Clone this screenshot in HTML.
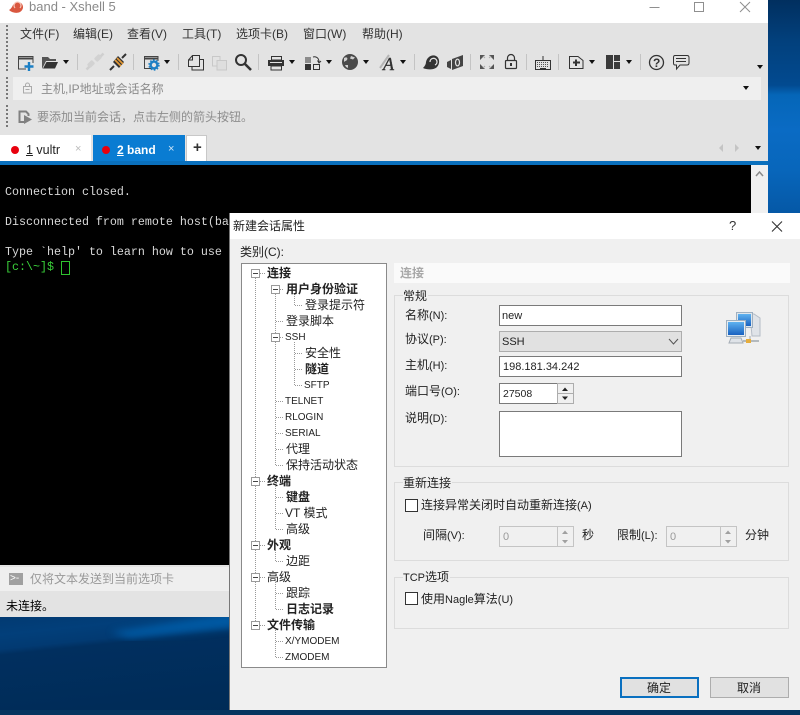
<!DOCTYPE html>
<html><head><meta charset="utf-8"><style>
html,body{margin:0;padding:0}
body{width:800px;height:715px;overflow:hidden;position:relative;background:#002f5f;font-family:"Liberation Sans","Noto Sans CJK SC",sans-serif;font-size:12px;color:#222}
div,span.a{position:absolute}
.t{position:absolute;white-space:nowrap;line-height:16px;height:16px}
.t i{font-style:normal;font-size:11px}
.b{font-weight:bold;color:#000}
.m{font-size:12px;color:#333}
.in{background:#fff;border:1px solid #7a7a7a;box-sizing:border-box}
.g{border:1px solid #dcdcdc;box-sizing:border-box}
.lb{background:#f0f0f0;padding:0 1px 0 0}
.sep{width:1px;height:16px;top:54px;background:#c4c4c4}
.ar{width:0;height:0;border-left:3.5px solid transparent;border-right:3.5px solid transparent;border-top:4px solid #111}
.ck{width:13px;height:13px;border:1px solid #333;background:#fff;box-sizing:border-box}
.tr{font-size:12px;color:#222}
.la{font-size:10px !important;margin-left:-1px;margin-top:1px}
svg{position:absolute;left:0;top:0}
</style></head><body>
<!-- desktop -->
<div style="left:768px;top:0;width:32px;height:213px;background:linear-gradient(180deg,#012f5f 0,#02407c 40px,#024a90 85px,#0566b8 95px,#0a6bc4 130px,#0866bb 170px,#0558a6 213px)"></div>
<div style="left:0;top:617px;width:230px;height:98px;background:linear-gradient(174deg,#023a72 0,#023f7a 18px,#023a72 32px,#012f5f 38px,#002b56 100%)"></div>
<svg width="230" height="715" viewBox="0 0 230 715" fill="none"><defs><filter id="bl"><feGaussianBlur stdDeviation="4"/></filter></defs><path d="M110 632L234 612V628L130 638Z" fill="#0663b2" opacity=".75" filter="url(#bl)"/></svg>
<div style="left:0;top:710px;width:800px;height:5px;background:#06345f"></div>
<!-- window -->
<div style="left:0;top:0;width:768px;height:23px;background:#fff"></div>
<div style="left:0;top:23px;width:768px;height:139px;background:#e3e3e3"></div>
<div class="t" style="left:29px;top:-1px;line-height:16px;font-size:13px;color:#8a8a8a">band - Xshell 5</div>
<!-- grips -->
<div style="left:6px;top:25px;width:2px;height:46px;background:repeating-linear-gradient(180deg,#777 0 2px,transparent 2px 4px)"></div>
<div style="left:6px;top:77px;width:2px;height:23px;background:repeating-linear-gradient(180deg,#777 0 2px,transparent 2px 4px)"></div>
<div style="left:6px;top:105px;width:2px;height:23px;background:repeating-linear-gradient(180deg,#777 0 2px,transparent 2px 4px)"></div>
<!-- menu -->
<div class="t m" style="left:20px;top:26px">文件(F)</div>
<div class="t m" style="left:73px;top:26px">编辑(E)</div>
<div class="t m" style="left:127px;top:26px">查看(V)</div>
<div class="t m" style="left:182px;top:26px">工具(T)</div>
<div class="t m" style="left:236px;top:26px">选项卡(B)</div>
<div class="t m" style="left:303px;top:26px">窗口(W)</div>
<div class="t m" style="left:362px;top:26px">帮助(H)</div>
<!-- address -->
<div style="left:13px;top:77px;width:748px;height:23px;background:#efefef"></div>
<div class="t" style="left:41px;top:81px;color:#8c8c8c">主机,IP地址或会话名称</div>
<div class="t" style="left:37px;top:109px;color:#8c8c8c">要添加当前会话，点击左侧的箭头按钮。</div>
<!-- tabs -->
<div style="left:0;top:135px;width:91px;height:27px;background:#fff"></div>
<div style="left:93px;top:135px;width:92px;height:27px;background:#0a7cd2"></div>
<div style="left:186px;top:135px;width:21px;height:27px;background:#fff;border:1px solid #c8c8c8;border-bottom:0;box-sizing:border-box"></div>
<div class="t" style="left:26px;top:142px;color:#222;font-size:12.5px"><u>1</u> vultr</div>
<div class="t" style="left:117px;top:142px;color:#fff;font-weight:bold;font-size:12px"><u>2</u> band</div>
<div class="t" style="left:75px;top:141px;color:#bbb;font-size:11px">×</div>
<div class="t" style="left:168px;top:141px;color:#cfe6f8;font-size:11px">×</div>
<div class="t" style="left:193px;top:140px;color:#333;font-weight:bold;font-size:15px">+</div>
<div style="left:11px;top:146px;width:8px;height:8px;border-radius:50%;background:#e8000e"></div>
<div style="left:102px;top:146px;width:8px;height:8px;border-radius:50%;background:#e8000e"></div>
<div style="left:0;top:161px;width:768px;height:4px;background:#0a70bd"></div>
<!-- terminal -->
<div style="left:0;top:165px;width:751px;height:400px;background:#000"></div>
<div style="left:751px;top:165px;width:17px;height:400px;background:#f0f0f0"></div>
<div style="left:0;top:565px;width:230px;height:2px;background:#e3e3e3"></div>
<div class="t" style="left:5px;top:184px;font:11.67px/16px 'Liberation Mono',monospace;color:#d8d8d8">Connection closed.</div>
<div class="t" style="left:5px;top:214px;font:11.67px/16px 'Liberation Mono',monospace;color:#d8d8d8">Disconnected from remote host(ba</div>
<div class="t" style="left:5px;top:244px;font:11.67px/16px 'Liberation Mono',monospace;color:#d8d8d8">Type `help' to learn how to use</div>
<div class="t" style="left:5px;top:259px;font:11.67px/16px 'Liberation Mono',monospace;color:#3ad03a">[c:\~]$</div>
<div style="left:61px;top:261px;width:7px;height:12px;border:1px solid #2fc22f"></div>
<!-- send bar -->
<div style="left:0;top:567px;width:230px;height:24px;background:#efefef"></div>
<div style="left:0;top:591px;width:230px;height:26px;background:#e3e3e3"></div>
<div style="left:9px;top:573px;width:14px;height:12px;background:#a0a0a0"></div>
<div class="t" style="left:10px;top:571px;color:#fff;font-size:10px">&gt;-</div>
<div class="t" style="left:30px;top:571px;color:#999">仅将文本发送到当前选项卡</div>
<div class="t" style="left:6px;top:598px;color:#000">未连接。</div>

<!-- toolbar icons -->
<svg width="800" height="180" viewBox="0 0 800 180" fill="none">
<!-- snail logo -->
<path d="M9 10C11 9 12 7 13 5C15 2 20 1 22 4C24 7 23 10 20 12C17 13.500 12 13 9 10Z" fill="#d9573f"/><path d="M15 8a3.500 3.500 0 1 1 5 0" stroke="#f7c6b8" stroke-width="1.200"/>
<!-- window controls -->
<path d="M649.5 7.5H659.5" stroke="#8f8f8f"/><rect x="694.5" y="2.5" width="9" height="9" stroke="#8f8f8f"/><path d="M740 2L750 12M750 2L740 12" stroke="#8f8f8f"/>
<!-- new -->
<path d="M26 69H18.5V56.5H33V63" stroke="#444"/><path d="M18.5 58.5H33" stroke="#444" stroke-width="2"/><path d="M29 62V71M24.5 66.5H33.5" stroke="#1c7fc4" stroke-width="2.4"/>
<!-- open -->
<path d="M42 69V57H48L50 59H56V61H46L42 69Z" fill="#555"/><path d="M43 68.5L46.5 62H58L55 68.5Z" fill="#333"/>
<!-- disconnected -->
<path d="M86.500 69.500L90 66M100 57L103.500 53.500" stroke="#cfcfcf" stroke-width="2.500"/><rect x="-3.500" y="-2.500" width="7" height="5" rx="1.500" transform="translate(91 64) rotate(-45)" fill="#d2d2d2"/><rect x="-3.500" y="-2.500" width="7" height="5" rx="1.500" transform="translate(98 58) rotate(-45)" fill="#d2d2d2"/>
<!-- connect -->
<path d="M110 70L114 66M122 58L126 54" stroke="#333" stroke-width="2"/><path d="M113 62L119 68L124 62L118 56Z" fill="#333"/><path d="M115 60L121 66M117 58L123 64" stroke="#e59a35" stroke-width="1.6"/>
<!-- properties -->
<path d="M152 68.5H144.5V56.5H158V61" stroke="#444"/><path d="M144.5 58.5H158" stroke="#444" stroke-width="2"/><circle cx="154" cy="65" r="3.4" stroke="#1c7fc4" stroke-width="2.4"/><circle cx="154" cy="65" r="5" stroke="#1c7fc4" stroke-dasharray="1.6 1.6" stroke-width="1.4"/>
<!-- copy -->
<path d="M188.500 60L192.500 55.500H199.500V66.500H188.500Z" stroke="#333"/><path d="M188.500 60H192.500V55.500" stroke="#333"/><path d="M200 59.500H203.500V70H192V67" stroke="#333"/>
<!-- paste -->
<path d="M212.5 56.5H220V66H212.5Z" stroke="#c8c8c8"/><path d="M217 60.5H226.5V70H217Z" fill="#dedede" stroke="#c8c8c8"/>
<!-- find -->
<circle cx="241" cy="60" r="5" stroke="#333" stroke-width="2"/><path d="M245 64L251 70" stroke="#333" stroke-width="2.6"/>
<!-- print -->
<path d="M271.5 56.5H281.5V60H271.5Z" stroke="#333"/><rect x="268" y="60" width="16" height="6" fill="#333"/><path d="M271 66H281.5V70H271V66Z" stroke="#333" fill="#e3e3e3"/><path d="M270 62.5H282" stroke="#e3e3e3"/>
<!-- transfer -->
<rect x="305" y="57" width="6" height="6" fill="#8c8c8c"/><rect x="305" y="64" width="6" height="6" fill="#333"/><rect x="313.5" y="64.500" width="6" height="5" stroke="#333"/><path d="M313 57C316 56 319 58 319 62M317.500 60.500L319 63L321 61" stroke="#333"/>
<!-- globe -->
<circle cx="350" cy="62" r="8" fill="#4a4a4a"/><path d="M344 58C347 56.500 348 58 347 60C346 61 345 61 344 62ZM351 56L355 57.500L353 59.500L350 58.500ZM345 65L348 65L348 68L346 67Z" fill="#cfcfcf"/>
<!-- font A -->
<path d="M380 68L389 55" stroke="#b5b5b5" stroke-width="2"/><text x="383" y="70" font-family="Liberation Serif,serif" font-style="italic" font-size="18" fill="#333" stroke="#333" stroke-width=".4">A</text>
<!-- snail -->
<path d="M423 68C425 66 426 64 426 62C427 57 432 54 436 56C440 58 440 64 437 67C434 70 427 70 423 68Z" fill="#333"/><path d="M430 62a3.500 3.500 0 1 1 5 3" stroke="#e3e3e3" stroke-width="1.300"/>
<!-- xftp -->
<path d="M447 62L451 60V69L447 67ZM452 59L463 55V66L452 70Z" fill="#444"/><ellipse cx="457.500" cy="62.500" rx="2" ry="3.400" stroke="#e3e3e3" stroke-width="1.200"/>
<!-- fullscreen -->
<path d="M480 55H485L480 60ZM494 55H489L494 60ZM480 69H485L480 64ZM494 69H489L494 64Z" fill="#555"/><path d="M485 58L483 56M489 58L491 56M485 66L483 68M489 66L491 68" stroke="#aaa"/>
<!-- lock -->
<rect x="505.500" y="60.500" width="11" height="8" rx="1" stroke="#333" stroke-width="1.200"/><path d="M507.500 60.500V58A3.500 3.500 0 0 1 514.500 58V60.500" stroke="#333" stroke-width="1.200"/><rect x="510" y="63" width="2" height="3" fill="#333"/>
<!-- keyboard -->
<rect x="535.500" y="60.500" width="15" height="9" stroke="#333"/><path d="M537 62.500H549M537 64.500H549M537 66.500H549" stroke="#555" stroke-dasharray="1 1"/><path d="M540 68.500H546M543 60V56" stroke="#333"/>
<!-- new tab -->
<path d="M569.500 56.500H578L583 60.500V68.500H569.500Z" stroke="#333"/><path d="M576 59.500V66M573 62.500H580" stroke="#333" stroke-width="2"/>
<!-- layout -->
<rect x="606" y="55" width="7" height="14" fill="#3a3a3a"/><rect x="614" y="55" width="6" height="6" fill="#3a3a3a"/><rect x="614" y="62" width="6" height="7" fill="#3a3a3a"/>
<!-- help -->
<circle cx="656.500" cy="62.500" r="7" stroke="#333" stroke-width="1.300"/><text x="653" y="67" font-family="Liberation Sans,sans-serif" font-weight="bold" font-size="12" fill="#333">?</text>
<!-- chat -->
<path d="M675 55.500H687Q689 55.500 689 57.500V63Q689 65 687 65H680L676.500 69V65H675Q673.500 65 673.500 63V57.500Q673.500 55.500 675 55.500Z" stroke="#333"/><path d="M676 58.500H686M676 61.500H686" stroke="#333"/>
<!-- address lock & info icon -->
<rect x="23.500" y="86.500" width="8" height="6.500" stroke="#aaa"/><path d="M25.500 86.500V85A2 2 0 0 1 29.500 85V86.500M25.500 89.500H29.500" stroke="#aaa"/>
<path d="M25 122H19.500V111.500H26L28.500 114V116" stroke="#808080" stroke-width="2"/><path d="M24 115V124L32 119.500Z" fill="#808080"/>
<!-- tab scroll arrows -->
<path d="M723 144V152L719 148Z" fill="#c4c4c4"/><path d="M735 144V152L739 148Z" fill="#c4c4c4"/>
<!-- scrollbar arrow -->
<path d="M756 176L759.500 172L763 176" stroke="#8a8a8a" stroke-width="1.500"/>
</svg>
<div class="sep" style="left:77px"></div><div class="sep" style="left:133px"></div><div class="sep" style="left:178px"></div><div class="sep" style="left:258px"></div><div class="sep" style="left:414px"></div><div class="sep" style="left:470px"></div><div class="sep" style="left:526px"></div><div class="sep" style="left:558px"></div><div class="sep" style="left:640px"></div>
<div class="ar" style="left:63px;top:60px"></div><div class="ar" style="left:164px;top:60px"></div><div class="ar" style="left:289px;top:60px"></div><div class="ar" style="left:326px;top:60px"></div><div class="ar" style="left:363px;top:60px"></div><div class="ar" style="left:400px;top:60px"></div><div class="ar" style="left:589px;top:60px"></div><div class="ar" style="left:626px;top:60px"></div><div class="ar" style="left:757px;top:65px"></div><div class="ar" style="left:743px;top:86px"></div><div class="ar" style="left:755px;top:146px"></div>

<!-- dialog -->
<div style="left:229px;top:213px;width:571px;height:497px;background:#f0f0f0;border-left:1px solid #777;box-sizing:border-box"></div>
<div style="left:230px;top:213px;width:570px;height:26px;background:#fff"></div>
<div class="t" style="left:233px;top:218px;color:#222">新建会话属性</div>
<div class="t" style="left:729px;top:218px;color:#333;font-size:13px">?</div>
<svg width="800" height="240" viewBox="0 0 800 240" fill="none" style="pointer-events:none"><path d="M772 221.500L782 231.500M782 221.500L772 231.500" stroke="#333" stroke-width="1.100"/></svg>
<div class="t" style="left:240px;top:244px;color:#222">类别(C):</div>
<!-- tree -->
<div style="left:241px;top:263px;width:146px;height:405px;background:#fff;border:1px solid #8a8a8a;box-sizing:border-box"></div>
<svg width="800" height="715" viewBox="0 0 800 715" fill="none">
<g stroke="#999" stroke-dasharray="1 1">
<path d="M255.500 278V626M275.500 294V466M275.500 486V530M275.500 550V562M275.500 582V610M275.500 630V658"/>
<path d="M294.500 294V306M294.500 342V386"/>
<path d="M260 273.500H265M280 289.500H284M295 305.500H303M276 321.500H284M280 337.500H284M295 353.500H303M295 369.500H303M295 385.500H303M276 401.500H284M276 417.500H284M276 433.500H284M276 449.500H284M276 465.500H284M260 481.500H265M276 497.500H284M276 513.500H284M276 529.500H284M260 545.500H265M276 561.500H284M260 577.500H265M276 593.500H284M276 609.500H284M260 625.500H265M276 641.500H284M276 657.500H284"/>
</g>
<g fill="#fff" stroke="#9a9a9a">
<rect x="251.500" y="269.500" width="8" height="8"/><rect x="271.500" y="285.500" width="8" height="8"/><rect x="271.500" y="333.500" width="8" height="8"/><rect x="251.500" y="477.500" width="8" height="8"/><rect x="251.500" y="541.500" width="8" height="8"/><rect x="251.500" y="573.500" width="8" height="8"/><rect x="251.500" y="621.500" width="8" height="8"/>
</g>
<path d="M253 273.500H258M273 289.500H278M273 337.500H278M253 481.500H258M253 545.500H258M253 577.500H258M253 625.500H258" stroke="#444"/>
</svg>
<div class="t tr b" style="left:267px;top:265px">连接</div>
<div class="t tr b" style="left:286px;top:281px">用户身份验证</div>
<div class="t tr" style="left:305px;top:297px">登录提示符</div>
<div class="t tr" style="left:286px;top:313px">登录脚本</div>
<div class="t tr la" style="left:286px;top:329px">SSH</div>
<div class="t tr" style="left:305px;top:345px">安全性</div>
<div class="t tr b" style="left:305px;top:361px">隧道</div>
<div class="t tr la" style="left:305px;top:377px">SFTP</div>
<div class="t tr la" style="left:286px;top:393px">TELNET</div>
<div class="t tr la" style="left:286px;top:409px">RLOGIN</div>
<div class="t tr la" style="left:286px;top:425px">SERIAL</div>
<div class="t tr" style="left:286px;top:441px">代理</div>
<div class="t tr" style="left:286px;top:457px">保持活动状态</div>
<div class="t tr b" style="left:267px;top:473px">终端</div>
<div class="t tr b" style="left:286px;top:489px">键盘</div>
<div class="t tr" style="left:285px;top:505px">VT 模式</div>
<div class="t tr" style="left:286px;top:521px">高级</div>
<div class="t tr b" style="left:267px;top:537px">外观</div>
<div class="t tr" style="left:286px;top:553px">边距</div>
<div class="t tr" style="left:267px;top:569px">高级</div>
<div class="t tr" style="left:286px;top:585px">跟踪</div>
<div class="t tr b" style="left:286px;top:601px">日志记录</div>
<div class="t tr b" style="left:267px;top:617px">文件传输</div>
<div class="t tr la" style="left:286px;top:633px">X/YMODEM</div>
<div class="t tr la" style="left:286px;top:649px">ZMODEM</div>
<!-- right -->
<div style="left:394px;top:263px;width:396px;height:20px;background:#fafafa"></div>
<div class="t" style="left:400px;top:265px;color:#a8a8a8;font-weight:bold">连接</div>
<div class="g" style="left:394px;top:295px;width:395px;height:172px"></div>
<div class="g" style="left:394px;top:482px;width:395px;height:79px"></div>
<div class="g" style="left:394px;top:577px;width:395px;height:52px"></div>
<div class="t lb" style="left:403px;top:288px">常规</div>
<div class="t lb" style="left:403px;top:475px">重新连接</div>
<div class="t lb" style="left:403px;top:569px"><i>TCP</i>选项</div>
<div class="t" style="left:405px;top:307px">名称<i>(N):</i></div>
<div class="t" style="left:405px;top:331px">协议<i>(P):</i></div>
<div class="t" style="left:405px;top:357px">主机<i>(H):</i></div>
<div class="t" style="left:405px;top:383px">端口号<i>(O):</i></div>
<div class="t" style="left:405px;top:410px">说明<i>(D):</i></div>
<div class="in" style="left:499px;top:305px;width:183px;height:21px"></div>
<div class="t" style="left:502px;top:308px;font-size:11px">new</div>
<div style="left:499px;top:331px;width:183px;height:21px;background:#e1e1e1;border:1px solid #adadad;box-sizing:border-box"></div>
<div class="t" style="left:502px;top:334px;font-size:11px">SSH</div>
<svg width="800" height="360" viewBox="0 0 800 360" fill="none"><path d="M669 339L673.500 344L678 339" stroke="#555"/></svg>
<div class="in" style="left:499px;top:356px;width:183px;height:21px"></div>
<div class="t" style="left:503px;top:359px;font-size:11px">198.181.34.242</div>
<div class="in" style="left:499px;top:383px;width:59px;height:21px"></div>
<div class="t" style="left:503px;top:386px;font-size:10.500px">27508</div>
<div style="left:557px;top:383px;width:17px;height:21px;background:#f0f0f0;border:1px solid #adadad;box-sizing:border-box"></div>
<div style="left:558px;top:393px;width:15px;height:1px;background:#adadad"></div>
<div class="in" style="left:499px;top:411px;width:183px;height:46px"></div>
<!-- network icon -->
<svg width="800" height="360" viewBox="0 0 800 360" fill="none">
<defs><linearGradient id="sc" x1="0" y1="0" x2="0" y2="1"><stop offset="0" stop-color="#5fb2f0"/><stop offset="1" stop-color="#1a62c0"/></linearGradient></defs>
<path d="M750 314H754L760 318V336H752Z" fill="#dfe3e8" stroke="#b4bcc6"/>
<rect x="736.500" y="312.500" width="16" height="15" fill="#dfe6ec" stroke="#9fb0c0"/><rect x="738" y="314" width="13" height="12" fill="url(#sc)"/>
<rect x="726.500" y="320.500" width="19" height="16" fill="#e8edf1" stroke="#9fb0c0"/><rect x="728" y="322" width="16" height="13" fill="url(#sc)"/>
<path d="M731 338H741L743 343H729Z" fill="#dfe3e8" stroke="#a5adb5"/>
<path d="M743 341H759" stroke="#a0a8ae" stroke-width="1.500"/><path d="M750 336V341" stroke="#a0a8ae"/><rect x="746" y="339" width="5" height="4" fill="#e6ad3c"/>
</svg>
<!-- reconnect -->
<div class="ck" style="left:405px;top:499px"></div>
<div class="t" style="left:421px;top:497px">连接异常关闭时自动重新连接<i>(A)</i></div>
<div class="t" style="left:423px;top:527px">间隔<i>(V):</i></div>
<div class="in" style="left:499px;top:526px;width:75px;height:21px;border-color:#c4c4c4;background:#f0f0f0"></div>
<div class="t" style="left:503px;top:529px;color:#999;font-size:11px">0</div>
<div style="left:557px;top:526px;width:17px;height:21px;border:1px solid #c4c4c4;box-sizing:border-box;background:#f0f0f0"></div>
<div class="t" style="left:582px;top:527px">秒</div>
<div class="t" style="left:617px;top:527px">限制<i>(L):</i></div>
<div class="in" style="left:666px;top:526px;width:71px;height:21px;border-color:#c4c4c4;background:#f0f0f0"></div>
<div class="t" style="left:670px;top:529px;color:#999;font-size:11px">0</div>
<div style="left:720px;top:526px;width:17px;height:21px;border:1px solid #c4c4c4;box-sizing:border-box;background:#f0f0f0"></div>
<div class="t" style="left:745px;top:527px">分钟</div>
<svg width="800" height="560" viewBox="0 0 800 560" fill="none">
<path d="M562 391L565 387.500L568 391ZM562 396.500L565 400L568 396.500Z" fill="#222"/>
<path d="M562 534L565 530.500L568 534ZM562 540L565 543.500L568 540ZM725 534L728 530.500L731 534ZM725 540L728 543.500L731 540Z" fill="#a0a0a0"/>
</svg>
<div class="ck" style="left:405px;top:592px"></div>
<div class="t" style="left:421px;top:591px">使用<i>Nagle</i>算法<i>(U)</i></div>
<!-- buttons -->
<div style="left:620px;top:677px;width:79px;height:21px;background:#e1e1e1;border:2px solid #0a70c0;box-sizing:border-box"></div>
<div style="left:710px;top:677px;width:79px;height:21px;background:#e1e1e1;border:1px solid #adadad;box-sizing:border-box"></div>
<div class="t" style="left:647px;top:680px">确定</div>
<div class="t" style="left:737px;top:680px">取消</div>
</body></html>
